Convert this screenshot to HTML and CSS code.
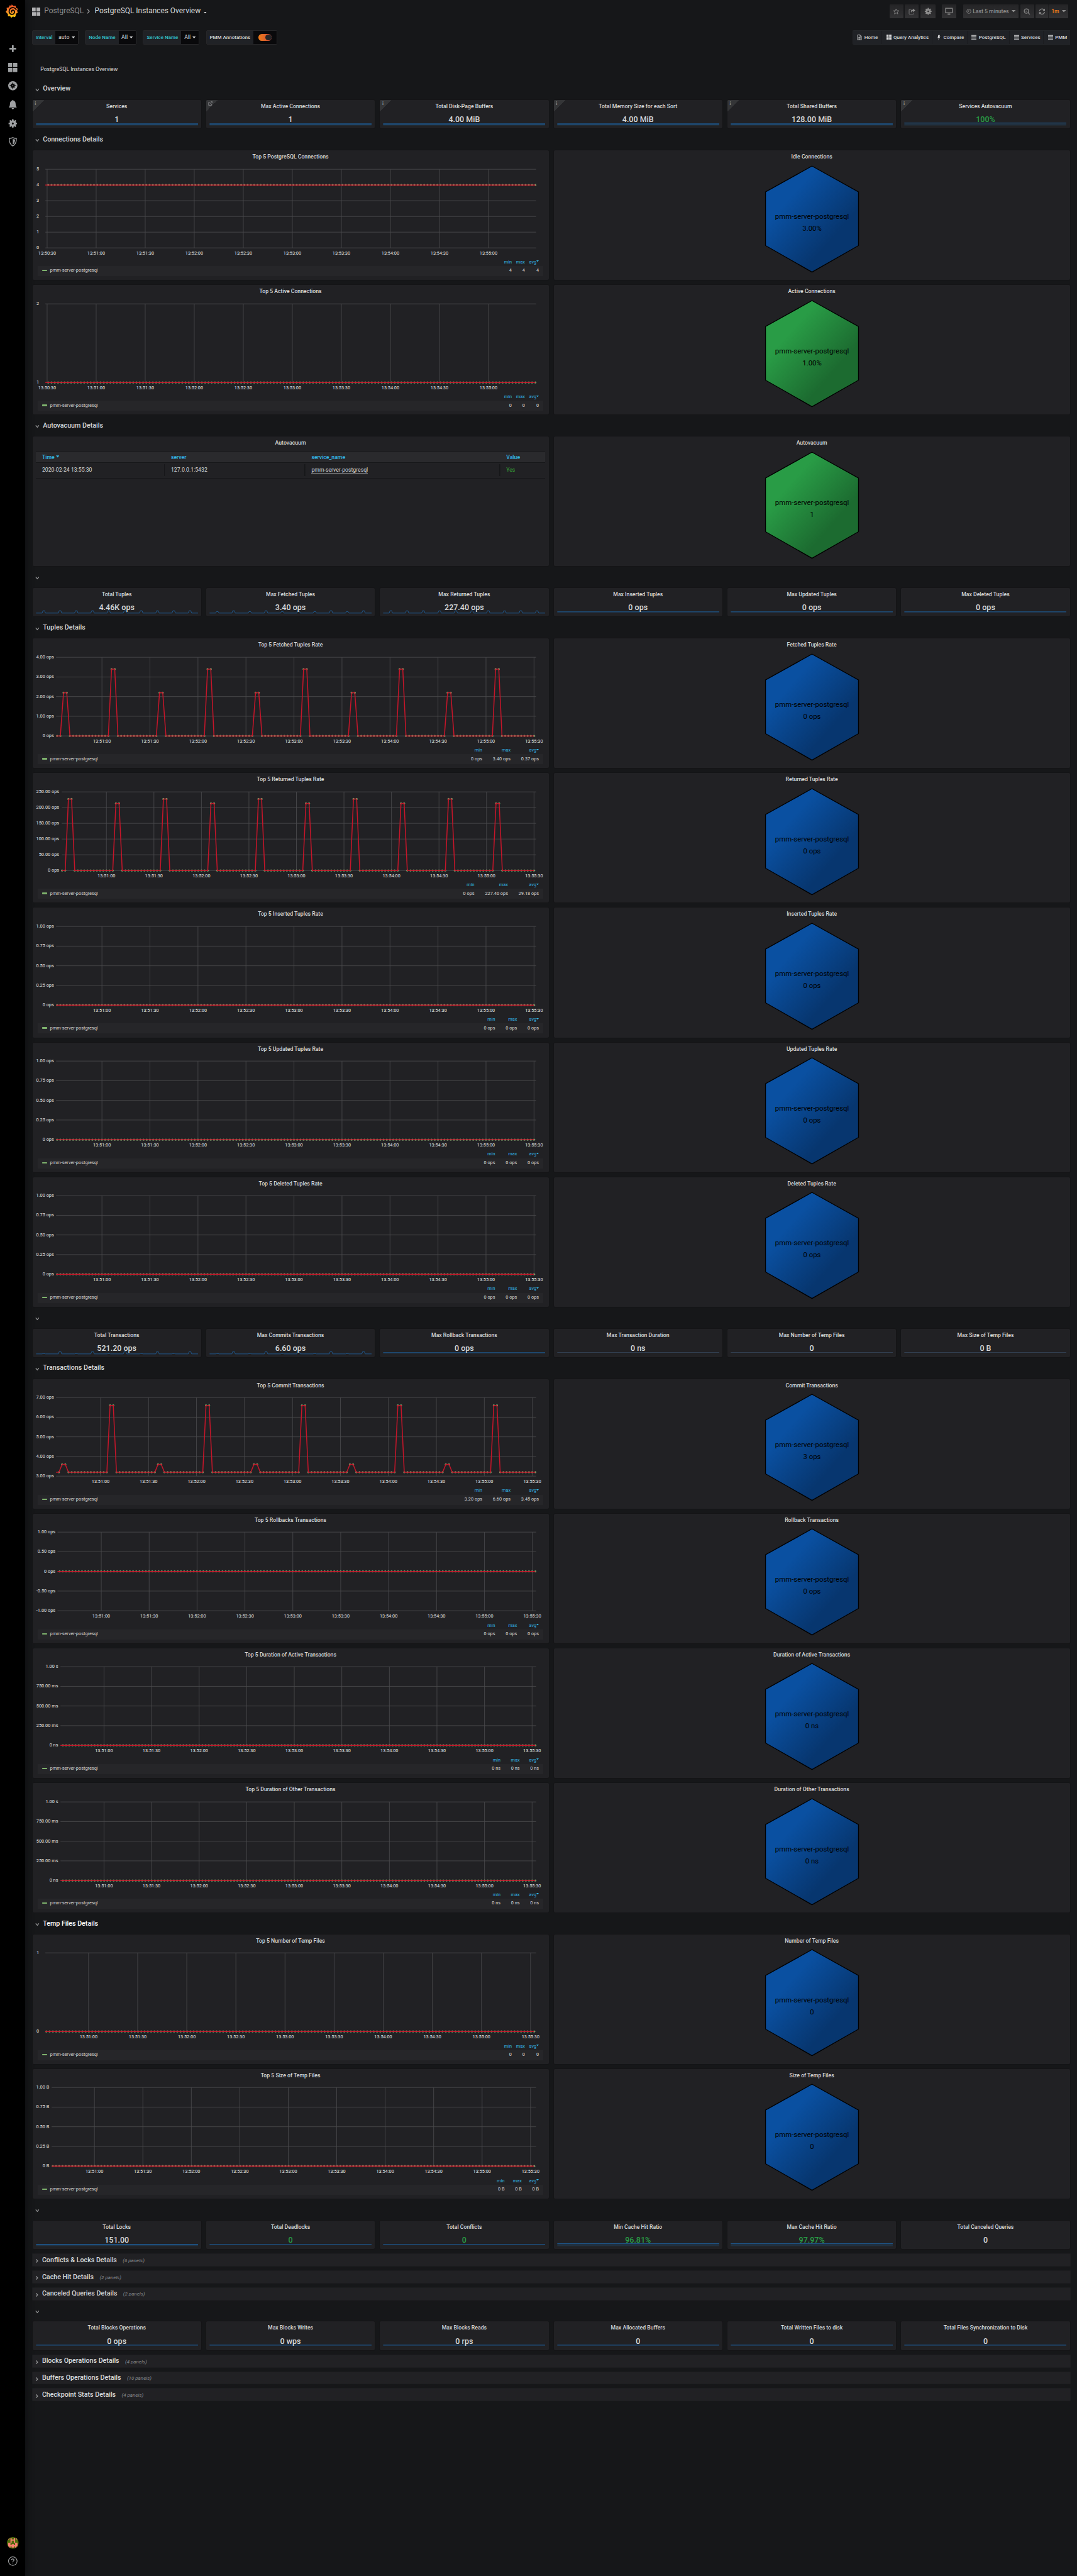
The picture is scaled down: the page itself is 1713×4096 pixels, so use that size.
FILE: index.html
```
<!DOCTYPE html>
<html lang="en">
<head>
<meta charset="utf-8">
<title>PostgreSQL Instances Overview</title>
<link rel="stylesheet" href="styles.css">
</head>
<body>
<svg class="defs" aria-hidden="true">
  <defs>
    <linearGradient id="hex-blue" x1="0" y1="0" x2="1" y2="1"><stop offset=".28" stop-color="#0a50a1"/><stop offset=".7" stop-color="#07366f"/></linearGradient>
    <linearGradient id="hex-green" x1="0" y1="0" x2="1" y2="1"><stop offset=".28" stop-color="#299c46"/><stop offset=".7" stop-color="#1c6b30"/></linearGradient>
    <linearGradient id="flame" x1="0" y1="0" x2="0" y2="1"><stop offset="0" stop-color="#f04e28"/><stop offset=".5" stop-color="#f5842a"/><stop offset="1" stop-color="#fdd20a"/></linearGradient>
    <symbol id="i-grid" viewBox="0 0 22 22"><path d="M1 0h8.4v10.2H0V1a1 1 0 0 1 1-1zM12.200 0H21a1 1 0 0 1 1 1v9.200H11.600V0zM0 11.800h9.900V22H1a1 1 0 0 1-1-1zM11.600 11.800H22V21a1 1 0 0 1-1 1h-9.400z"/></symbol>
    <symbol id="i-gear" viewBox="0 0 24 24"><path fill-rule="evenodd" d="M10.300 1h3.400l.5 3 1.900.8 2.500-1.800 2.400 2.400-1.800 2.500.8 1.900 3 .5v3.400l-3 .5-.8 1.900 1.800 2.500-2.400 2.400-2.500-1.800-1.900.8-.5 3h-3.400l-.5-3-1.900-.8L5.400 21 3 18.600l1.800-2.500-.8-1.900-3-.5v-3.400l3-.5.8-1.900L3 5.400 5.400 3l2.500 1.800L9.800 4zM12 9.500a2.500 2.500 0 1 0 0 5 2.500 2.500 0 0 0 0-5z"/></symbol>
    <symbol id="i-bars" viewBox="0 0 12 12"><path d="M0 1.200h12v1.300H0zM0 4.200h12v1.300H0zM0 7.200h12v1.300H0zM0 10.200h12v1.300H0z"/></symbol>
    <symbol id="i-caret" viewBox="0 0 8 5"><path d="M0 0h8L4 4.600z"/></symbol>
    <symbol id="i-link" viewBox="0 0 12 12"><path fill="none" stroke="currentColor" stroke-width="1.300" d="M9 7v3.500H1.200V3H5.500M4.500 7.500L10.500 1.500M7 1h4v4"/></symbol>
  </defs>
</svg>
<aside class="sidebar">
  <svg class="logo" viewBox="0 0 30 32"><path fill="url(#flame)" d="M14.500 0l3.600 3.200 5.400-.4 1 5 4.500 2.700-1.800 4.600 1.600 4.700-4.200 2.200-.8 5-1.600 3.200-5-1.500-3.700 2.900-3-3.600-5 .2-.2-5.200L0 17.600l3.200-4-1-5.300 5.300-1.100 2-4.900 4 .8z"/><path fill="none" stroke="#000" stroke-width="2.600" stroke-linecap="round" d="M25 12.500C22.500 7.500 16.500 6.200 12.200 9 7.500 12.200 7 18.500 10.300 21.700c3.500 3.300 9.200 2.200 10.700-1.900 1.200-3.500-1.300-6.500-4.300-6.200-2.400.3-3.300 2.700-2.200 4.200"/></svg>
  <nav class="side-nav">
    <svg viewBox="0 0 22 22"><path d="M9 3h4v6h6v4h-6v6H9v-6H3V9h6z"/></svg>
    <svg><use href="#i-grid"/></svg>
    <svg viewBox="0 0 22 22"><circle cx="11" cy="11" r="11"/><path fill="#000" d="M11 2l1.600 5.200L16 6l-1.200 3.400L20 11l-5.200 1.600L16 16l-3.400-1.200L11 20l-1.600-5.200L6 16l1.200-3.400L2 11l5.200-1.600L6 6l3.400 1.200z"/><circle cx="11" cy="11" r="1.300"/></svg>
    <svg viewBox="0 0 22 22"><path d="M11 0c1 0 1.500.6 1.500 1.500C16 2.200 17.500 5 17.700 8.500c.2 4.500.8 6.500 2.300 8v1.600H2v-1.600c1.500-1.500 2.100-3.500 2.300-8C4.500 5 6 2.200 9.500 1.500 9.500.6 10 0 11 0zM8.500 19.500h5c0 1.500-1 2.500-2.500 2.500s-2.500-1-2.500-2.500z"/></svg>
    <svg><use href="#i-gear"/></svg>
    <svg viewBox="0 0 22 22"><path fill="none" stroke="#9fa1a3" stroke-width="2" d="M11 1.200c2.500 1.300 5.500 1.800 8.500 1.800.3 8-2.200 14.500-8.500 18C4.700 17.500 2.200 11 2.500 3 5.500 3 8.500 2.500 11 1.200z"/><path d="M11 4.500c1.800.8 3.500 1.200 5.500 1.300-.2 5.500-2 9.500-5.500 12z"/></svg>
  </nav>
  <div class="side-foot">
    <svg class="avatar" viewBox="0 0 28 28"><clipPath id="disc"><circle cx="14" cy="14" r="14"/></clipPath><g clip-path="url(#disc)"><path fill="#4f6b0a" d="M0 0h28v28H0z"/><path fill="#fa8072" d="M3 3h3v3H3zM22 3h3v3h-3zM8.500 3h2.800v3h5.400V3h2.800v11h-2.800V8.700h-5.400V14H8.500zM3 14h5.500v5.500h2.800V17h5.400v2.500h2.800V14H25v8.500h-2.800V25h-2.700v-2.500h-2.800V25h-5.400v-2.500H8.500V25H5.800v-2.500H3z"/></g></svg>
    <svg class="help" viewBox="0 0 22 22"><circle cx="11" cy="11" r="10.200" fill="none" stroke="#b0b1b3" stroke-width="1.500"/><path fill="none" stroke="#b0b1b3" stroke-width="1.700" d="M8 8.700C8 4.800 14 5 14 8.400c0 2.300-3 2.300-3 4.600M11 14.500v2"/></svg>
  </div>
</aside>
<div class="page">
  <header class="navbar">
    <div class="crumbs">
      <svg class="crumb-icon"><use href="#i-grid"/></svg>
      <span class="folder">PostgreSQL</span>
      <svg class="crumb-sep" viewBox="0 0 8 12"><path d="M1.500 1l4.500 5-4.500 5"/></svg>
      <span class="board">PostgreSQL Instances Overview</span>
      <svg class="caret"><use href="#i-caret"/></svg>
    </div>
    <div class="tools">
      <span class="btn b-star"><svg viewBox="0 0 16 16"><path class="line" d="M8 1.500l1.800 4.300 4.700.4-3.600 3 1.100 4.600L8 11.300l-4 2.500 1.100-4.600-3.600-3 4.700-.4z"/></svg></span>
      <span class="btn b-share"><svg viewBox="0 0 16 16"><path class="line" d="M7 2.500H3a1.500 1.500 0 0 0-1.500 1.500v9A1.500 1.500 0 0 0 3 14.500h8a1.500 1.500 0 0 0 1.500-1.500v-2"/><path d="M10.500 1L16 5.200l-5.500 4.200V6.800C8 6.800 7 7.800 6.800 10.500 4 6 6.500 3.600 10.500 3.600z"/></svg></span>
      <span class="btn b-gear"><svg class="big"><use href="#i-gear"/></svg></span>
      <span class="btn b-tv"><svg class="big" viewBox="0 0 18 16"><path class="line thick" d="M1.500 1h15v10.500h-15z"/><path d="M6 13h6v2.500H6z"/></svg></span>
      <span class="btn b-time"><svg class="clock" viewBox="0 0 12 12"><circle class="line" cx="6" cy="6" r="5"/><path class="line" d="M6 3v3.300H3.800"/></svg>Last 5 minutes<svg class="caret"><use href="#i-caret"/></svg></span>
      <span class="btn b-zoom"><svg viewBox="0 0 16 16"><circle class="line thick" cx="6.800" cy="6.800" r="5.200"/><path class="line thick" d="M4.500 6.800h4.600M10.700 10.700l4.300 4.300"/></svg></span>
      <span class="btn b-refresh"><svg viewBox="0 0 16 16"><path class="line thick" d="M2 7a6 6 0 0 1 11-2.500M14 9A6 6 0 0 1 3 11.500"/><path d="M15 1v5.500H9.500zM1 15V9.500h5.500z"/></svg></span>
      <span class="btn b-every">1m<svg class="caret"><use href="#i-caret"/></svg></span>
    </div>
  </header>
  <div class="submenu">
    <div class="vars">
      <div class="var v1"><span class="var-label">Interval</span><span class="var-value">auto<svg class="caret"><use href="#i-caret"/></svg></span></div>
      <div class="var v2"><span class="var-label">Node Name</span><span class="var-value">All<svg class="caret"><use href="#i-caret"/></svg></span></div>
      <div class="var v3"><span class="var-label">Service Name</span><span class="var-value">All<svg class="caret"><use href="#i-caret"/></svg></span></div>
      <div class="var v4"><span class="var-label plain">PMM Annotations</span><span class="var-value"><i class="switch"></i></span></div>
    </div>
    <nav class="links">
      <a class="l1"><svg viewBox="0 0 12 14"><path fill="none" stroke="currentColor" stroke-width="1.200" d="M1.500.8h6l3 3.200v9.200h-9zM7.300 1v3.200h3M3.500 6.500h5M3.500 8.700h5M3.500 10.900h5"/></svg>Home</a>
      <a class="l2"><svg><use href="#i-grid"/></svg>Query Analytics</a>
      <a class="l3"><svg viewBox="0 0 12 14"><path d="M5 1h4L7.300 4.700l2.700-.5L5 13.500l1.300-6-2.800.6z"/></svg>Compare</a>
      <a class="l4"><svg><use href="#i-bars"/></svg>PostgreSQL</a>
      <a class="l5"><svg><use href="#i-bars"/></svg>Services</a>
      <a class="l6"><svg><use href="#i-bars"/></svg>PMM</a>
    </nav>
  </div>
  <div class="text-panel">PostgreSQL Instances Overview</div>
  <main class="dashboard" id="dashboard"></main>
</div>
<script src="dashboard.js"></script>
</body>
</html>
```
FILE: styles.css
```
/* 1rem is ten units of a 2560-unit-wide dashboard */
html { font-size: 0.390625vw; background: #161719; }
* { box-sizing: border-box; }
body { margin: 0; display: flex; min-height: 100vh; font-family: Roboto, "Liberation Sans", sans-serif; font-size: 1.3rem; color: #d8d9da; background: #161719; overflow: hidden; }
svg { display: block; flex: none; fill: currentColor; }
.defs { position: absolute; width: 0; height: 0; }

.sidebar { width: 6rem; flex: none; background: #000; color: #9fa1a3; display: flex; flex-direction: column; align-items: center; padding: 1.1rem 0 2.400rem .2rem; box-shadow: 0 0 2rem #0b0c0e; }
.logo { width: 3rem; height: 3.200rem; margin-right: .5rem; }
.side-nav { display: flex; flex-direction: column; gap: 2.220rem; margin-top: 6.200rem; }
.side-nav svg { width: 2.200rem; height: 2.200rem; }
.side-foot { margin-top: auto; display: flex; flex-direction: column; align-items: center; gap: 1.900rem; }
.avatar { width: 2.800rem; height: 2.800rem; }
.help { width: 2.200rem; height: 2.200rem; }

.page { flex: 1; min-width: 0; padding: 0 1.700rem 0 1.700rem; }
.navbar { display: flex; justify-content: space-between; height: 5.500rem; }
.crumbs { display: flex; align-items: center; font-size: 1.780rem; line-height: 1; }
.crumb-icon { width: 2rem; height: 2rem; color: #b0b0b2; margin: 0 .9rem 0 -.1rem; }
.folder { color: #8e8e8e; }
.crumb-sep { width: .8rem; height: 1.200rem; margin: 0 1rem 0 .8rem; fill: none; stroke: #9a9a9c; stroke-width: 2; }
.caret { width: .8rem; height: .5rem; }
.crumbs .caret { width: .7rem; height: .4rem; margin: .5rem 0 0 .8rem; }
.tools { display: flex; padding-top: 1.100rem; margin-right: .4rem; color: #8e8e8e; font-weight: 500; }
.btn { height: 3.200rem; display: flex; align-items: center; justify-content: center; background: linear-gradient(#242426, #323234); border-radius: .2rem; margin-left: .4rem; }
.btn svg { width: 1.600rem; height: 1.600rem; }
.btn .big { width: 1.900rem; height: 1.800rem; }
.line { fill: none; stroke: currentColor; stroke-width: 1.200; }
.thick { stroke-width: 1.800; }
.b-star, .b-share, .b-zoom { width: 3.300rem; }
.b-gear { width: 3.600rem; }
.b-tv { width: 3.500rem; margin-left: 1.400rem; }
.b-time { width: 13.200rem; margin-left: 1.600rem; }
.b-time .clock { width: 1.200rem; height: 1.200rem; margin-right: .3rem; }
.btn .caret { width: .9rem; height: .6rem; margin-left: .6rem; }
.b-refresh { width: 3.050rem; border-right: 1px solid #1f1f21; }
.b-every { width: 4.650rem; margin-left: 0; color: #eb7b18; }
.b-every .caret { color: #8e8e8e; }

.submenu { display: flex; justify-content: space-between; margin: 1.600rem -.1rem 0 -.1rem; height: 3.500rem; }
.vars { display: flex; gap: 1.550rem; }
.var { display: flex; border: 1px solid #262628; border-radius: .3rem; overflow: hidden; }
.var-label { flex: 1; display: flex; align-items: center; justify-content: center; background: #202226; color: #33c5cf; font-size: 1.200rem; font-weight: 500; }
.plain { color: #d8d9da; }
.var-value { display: flex; align-items: center; justify-content: center; background: #09090b; gap: .5rem; }
.v1 { width: 11.050rem; } .v1 .var-value { width: 5.300rem; }
.v2 { width: 12.250rem; } .v2 .var-value { width: 4.100rem; }
.v3 { width: 13.450rem; } .v3 .var-value { width: 4.200rem; }
.v4 { width: 16.950rem; } .v4 .var-value { width: 5.600rem; }
.switch { width: 3.200rem; height: 1.600rem; border-radius: .8rem; background: linear-gradient(90deg, #eb7b18, #d44a3a); display: flex; justify-content: flex-end; align-items: center; padding-right: .1rem; }
.switch::after { content: ""; width: 1.400rem; height: 1.400rem; border-radius: 50%; background: #262628; }
.links { display: flex; font-size: 1.200rem; font-weight: 500; border-radius: .3rem 0 0 .3rem; background: #202226; border: 1px solid #242629; border-right: 0; }
.links a { display: flex; align-items: center; padding-left: 1rem; gap: .5rem; border-right: 1px solid #1b1c1f; white-space: nowrap; }
.links a:last-child { border-right: 0; }
.links svg { width: 1.200rem; height: 1.200rem; }
.links .l1 svg, .links .l3 svg { height: 1.400rem; }
.l1 { width: 6.900rem; } .l2 { width: 11.900rem; } .l3 { width: 8.400rem; } .l4 { width: 10.050rem; } .l5 { width: 8.100rem; } .l6 { width: 6.300rem; }

.text-panel { margin-top: 1.100rem; height: 6.800rem; padding: 3.900rem 0 0 1.900rem; line-height: 2rem; }

.dashboard { display: flex; flex-direction: column; gap: 1.200rem; margin-top: 1.250rem; }
.row-head { display: flex; align-items: center; height: 2.800rem; padding: .1rem 0 0 .7rem; font-size: 1.600rem; font-weight: 500; line-height: 1; }
.row-head .chev { width: 1rem; height: .9rem; margin: .4rem .8rem 0 0; }
.row-head.closed { background: #212124; box-shadow: 0 0 0 .1rem #212124; padding-left: .5rem; }
.row-head.hover { color: #fff; }
.row-head em { font-size: 1.200rem; font-weight: 400; color: #8a8b8d; margin: .25rem 0 0 1.400rem; }
.chev { fill: none; stroke: #9a9b9d; stroke-width: 1.800; }
.stats { display: grid; grid-template-columns: repeat(6, 1fr); gap: 1.200rem; }
.pair { display: grid; grid-template-columns: 1fr 1fr; gap: 1.200rem; }
.panel { position: relative; background: #212124; border-radius: .3rem; box-shadow: 0 0 0 .1rem #141416; overflow: hidden; }
.panel h3 { margin: 0; height: 2.900rem; line-height: 3.050rem; text-align: center; font-size: 1.300rem; font-weight: 500; }
.stat { height: 6.800rem; }
.stat .value { position: relative; text-align: center; font-size: 1.870rem; font-weight: 500; line-height: 2.200rem; margin-top: .7rem; }
.stat .ok { color: #299c46; }
.spark { position: absolute; left: 0; top: 0; width: 100%; height: 100%; }
.corner { position: absolute; left: 0; top: 0; width: 2.750rem; height: 2.750rem; background: linear-gradient(135deg, #343537 50%, transparent 50%); color: #8b8c8e; padding: .25rem 0 0 .55rem; font: 700 1.100rem/1.200rem "Liberation Serif", serif; }
.corner svg { width: 1.100rem; height: 1.100rem; margin-left: -.15rem; }
.graph { height: 30.800rem; }
.graph .plot { width: 100%; height: 22.800rem; }
.plot text { font-size: 11px; fill: #e0e1e2; }
.grid-line { stroke: #4a4a4d; stroke-width: 1.300; }
.series { fill: none; stroke: #c4162a; stroke-width: 2.300; }
.dot { fill: #7ea76e; }
.legend { width: 120.100rem; margin-left: 1.300rem; border-collapse: collapse; font-size: 1.100rem; line-height: 1.300rem; white-space: nowrap; }
.legend th { font-weight: 400; color: #33b5e5; height: 1.800rem; padding: 0 0 0 1rem; text-align: right; }
.legend td { height: 2.400rem; padding: 0 0 .1rem 2.500rem; text-align: right; background: #262629; }
.legend .name { width: 100%; text-align: left; padding-left: 1.050rem; }
.legend .name i { display: inline-block; width: 1.200rem; height: .35rem; border-radius: .1rem; background: #7eb26d; margin-right: .65rem; vertical-align: .15rem; }
.legend .last { padding-right: 1rem; }
.legend .sort { display: inline-block; width: .6rem; height: .4rem; vertical-align: .25rem; }
.hex { width: 100%; height: 27.900rem; }
.hex polygon { stroke: #000; stroke-width: 2; }
.hex text { font-size: 17px; fill: #000; text-anchor: middle; }
.table-wrap { padding: .7rem .85rem 0; }
.data { width: 100%; table-layout: fixed; border-collapse: collapse; font-size: 1.300rem; line-height: 1; }
.data th { text-align: left; font-weight: 500; color: #33b5e5; background: #2a2a2d; border-top: .25rem solid #161719; border-bottom: .25rem solid #161719; height: 2.500rem; padding: 0 1.450rem; }
.data td { height: 3.700rem; padding: 0 1.450rem; border-bottom: .2rem solid #161719; background: linear-gradient(#161719, #161719) right 55% / .25rem 80% no-repeat; }
.data td:last-child { background: none; color: #37a337; }
.data td span { border-bottom: 1px solid #d8d9da; padding-bottom: .1rem; }
.data .sort { display: inline-block; width: .8rem; height: .6rem; margin-left: .3rem; vertical-align: .2rem; }
.c1 { width: 30.650rem; } .c2 { width: 33.400rem; } .c3 { width: 46.300rem; }
```
FILE: dashboard.js
```
const NAME = 'pmm-server-postgresql';
const caret = '<svg class="sort"><use href="#i-caret"/></svg>';

const rowHead = (title = '', cls = '') =>
  `<div class="row-head ${cls}"><svg class="chev" viewBox="0 0 10 9"><path d="M1.200 2l3.800 4.500L8.800 2"/></svg>${title}</div>`;
const closedRow = (title, n) =>
  `<div class="row-head closed"><svg class="chev" viewBox="0 0 10 9"><path d="M3.500 .5l3.800 4-3.800 4"/></svg>${title}<em>(${n} panels)</em></div>`;

/* Sparkline kinds: flat lines by height, or spikes [even, odd] above the base */
function spark(kind) {
  if (!kind) return '';
  const flat = { high: [57, 2.4, 1], full: [54.5, 1.5, 1], zero: [56.700, 2, 0], faint: [56, 1, 0] };
  let body;
  if (flat[kind]) {
    const [y, w, fill] = flat[kind];
    body = (fill ? `<path fill="#1f78c1" fill-opacity=".18" d="M8 ${y}H393V60.500H8z"/>` : '') +
      `<path fill="none" stroke="${kind === 'faint' ? '#3c5068' : '#1e578c'}" stroke-width="${w}" d="M8 ${y}H393"/>`;
  } else {
    let d = 'M8 59.500';
    for (let i = 0; i < 10; i++) {
      const x = 26.400 + i * 38.600, h = kind[i % 2];
      d += `H${x - 4}L${x - 2} ${59.500 - h}H${x + 2}L${x + 4} 59.500`;
    }
    body = `<path fill="none" stroke="#1f66a8" stroke-width="1.200" d="${d}H393"/>`;
  }
  return `<svg class="spark" viewBox="0 0 401 68" preserveAspectRatio="none">${body}</svg>`;
}
const stats = list => '<div class="stats">' + list.map(([title, value, kind, cls = '', corner = '']) =>
  `<section class="panel stat">${spark(kind)}${corner ? `<span class="corner">${corner}</span>` : ''}<h3>${title}</h3><div class="value ${cls}">${value}</div></section>`).join('') + '</div>';

const hex = (title, value, color = 'blue') =>
  `<section class="panel graph"><h3>${title}</h3><svg class="hex" viewBox="0 29 1227 279"><polygon fill="url(#hex-${color})" points="613.500,36.500 724,98 724,225.500 613.500,288.500 503,225.500 503,98"/><text x="613.500" y="161.500">${NAME}</text><text x="613.500" y="190.500">${value}</text></svg></section>`;

function graph(o) {
  const R = 1196.600, T = 44.200, B = 231, n = o.y.length - 1;
  const yAt = f => B - f * (B - T);
  let s = '';
  o.y.forEach((label, i) => {
    const y = yAt(i / n);
    s += `<path class="grid-line" d="M${o.left} ${y}H${R}"/><text x="${o.labelEnd}" y="${y + 3}" text-anchor="end">${label}</text>`;
  });
  const first = o.from || '13:51:00';
  const start = first === '13:50:30' ? 0 : 1;
  const step = (o.x1 - o.x0) / (o.count - 1);
  for (let i = 0; i < o.count; i++) {
    const sec = (i + start) * 30 + 30, x = o.x0 + i * step;
    const label = `13:${50 + Math.floor(sec / 60)}:${sec % 60 ? '30' : '00'}`;
    s += `<path class="grid-line" d="M${x} ${T}V${B}"/><text x="${x}" y="247.400" text-anchor="middle">${label}</text>`;
  }
  /* one sample every two seconds, counted back from the newest */
  const dx = step / 15, last = o.last || 1194.800, pts = [];
  for (let k = Math.floor((last - o.left) / dx); k >= 0; k--) {
    let f = o.base;
    if (o.spikes) {
      const m = k - o.spikeAt;
      if (m >= 0 && (m % 15 === 0 || m % 15 === 1)) f = o.spikes[Math.floor(m / 15) % 2];
    }
    pts.push([last - k * dx, yAt(f)]);
  }
  s += pts.map(p => `<circle class="dot" cx="${p[0].toFixed(1)}" cy="${p[1].toFixed(1)}" r="2.400"/>`).join('');
  s += `<path class="series" d="M${o.left} ${yAt(o.base)}L${pts.map(p => p[0].toFixed(1) + ' ' + p[1].toFixed(1)).join('L')}"/>`;
  const [mn, mx, av] = o.legend;
  return `<section class="panel graph"><h3>${o.title}</h3><svg class="plot" viewBox="0 29 1227 228">${s}</svg>
  <table class="legend"><tr><th></th><th>min</th><th>max</th><th class="last">avg${caret}</th></tr>
  <tr><td class="name"><i></i>${NAME}</td><td>${mn}</td><td>${mx}</td><td class="last">${av}</td></tr></table></section>`;
}
const pair = (a, b) => `<div class="pair">${a}${b}</div>`;

const conn = { left: 30, labelEnd: 15, x0: 34.300, x1: 1083.400, count: 10, from: '13:50:30' };
const ops = { left: 55.600, labelEnd: 50.500, x0: 164.600, x1: 1191.600, count: 10, last: 1191.600 };
const unit = { ...ops, y: ['0 ops', '0.25 ops', '0.50 ops', '0.75 ops', '1.00 ops'], base: 0, legend: ['0 ops', '0 ops', '0 ops'] };
const dur = { left: 66, labelEnd: 60.500, x0: 169.500, x1: 1187, count: 10, y: ['0 ns', '250.00 ms', '500.00 ms', '750.00 ms', '1.00 s'], base: 0, legend: ['0 ns', '0 ns', '0 ns'] };
const link = '<svg><use href="#i-link"/></svg>';

const table = `<section class="panel graph"><h3>Autovacuum</h3><div class="table-wrap"><table class="data">
  <tr><th class="c1">Time${caret}</th><th class="c2">server</th><th class="c3">service_name</th><th>Value</th></tr>
  <tr><td>2020-02-24 13:55:30</td><td>127.0.0.1:5432</td><td><span>${NAME}</span></td><td>Yes</td></tr></table></div></section>`;

document.getElementById('dashboard').innerHTML = [
  rowHead('Overview'),
  stats([['Services', '1', 'high', '', 'i'], ['Max Active Connections', '1', 'high', '', link], ['Total Disk-Page Buffers', '4.00 MiB', 'high', '', 'i'],
    ['Total Memory Size for each Sort', '4.00 MiB', 'high', '', 'i'], ['Total Shared Buffers', '128.00 MiB', 'high', '', 'i'], ['Services Autovacuum', '100%', 'full', 'ok', 'i']]),
  rowHead('Connections Details'),
  pair(graph({ ...conn, title: 'Top 5 PostgreSQL Connections', y: ['0', '1', '2', '3', '4', '5'], base: .8, legend: ['4', '4', '4'] }), hex('Idle Connections', '3.00%')),
  pair(graph({ ...conn, title: 'Top 5 Active Connections', y: ['1', '2'], base: 0, legend: ['0', '0', '0'] }), hex('Active Connections', '1.00%', 'green')),
  rowHead('Autovacuum Details'),
  pair(table, hex('Autovacuum', '1', 'green')),
  rowHead(),
  stats([['Total Tuples', '4.46K ops', [5.500, 5.500]], ['Max Fetched Tuples', '3.40 ops', [3.600, 5.500]], ['Max Returned Tuples', '227.40 ops', [5.500, 5.300]],
    ['Max Inserted Tuples', '0 ops', 'zero'], ['Max Updated Tuples', '0 ops', 'zero'], ['Max Deleted Tuples', '0 ops', 'zero']]),
  rowHead('Tuples Details'),
  pair(graph({ ...ops, title: 'Top 5 Fetched Tuples Rate', y: ['0 ops', '1.00 ops', '2.00 ops', '3.00 ops', '4.00 ops'], base: 0, spikes: [.85, .55], spikeAt: 11, legend: ['0 ops', '3.40 ops', '0.37 ops'] }), hex('Fetched Tuples Rate', '0 ops')),
  pair(graph({ ...ops, left: 68.700, labelEnd: 63, x0: 175.200, title: 'Top 5 Returned Tuples Rate', y: ['0 ops', '50.00 ops', '100.00 ops', '150.00 ops', '200.00 ops', '250.00 ops'], base: 0, spikes: [.854, .9096], spikeAt: 11, legend: ['0 ops', '227.40 ops', '29.18 ops'] }), hex('Returned Tuples Rate', '0 ops')),
  pair(graph({ ...unit, title: 'Top 5 Inserted Tuples Rate' }), hex('Inserted Tuples Rate', '0 ops')),
  pair(graph({ ...unit, title: 'Top 5 Updated Tuples Rate' }), hex('Updated Tuples Rate', '0 ops')),
  pair(graph({ ...unit, title: 'Top 5 Deleted Tuples Rate' }), hex('Deleted Tuples Rate', '0 ops')),
  rowHead(),
  stats([['Total Transactions', '521.20 ops', [.6, 5.500]], ['Max Commits Transactions', '6.60 ops', [.6, 5.500]], ['Max Rollback Transactions', '0 ops', 'zero'],
    ['Max Transaction Duration', '0 ns', 'faint'], ['Max Number of Temp Files', '0', 'faint'], ['Max Size of Temp Files', '0 B', 'faint']]),
  rowHead('Transactions Details'),
  pair(graph({ ...ops, x0: 161.400, x1: 1187.500, last: 1194.800, title: 'Top 5 Commit Transactions', y: ['3.00 ops', '4.00 ops', '5.00 ops', '6.00 ops', '7.00 ops'], base: .05, spikes: [.9, .15], spikeAt: 12, legend: ['3.20 ops', '6.60 ops', '3.45 ops'] }), hex('Commit Transactions', '3 ops')),
  pair(graph({ ...ops, left: 59, labelEnd: 54, x0: 163, x1: 1187.500, last: 1194.800, title: 'Top 5 Rollbacks Transactions', y: ['-1.00 ops', '-0.50 ops', '0 ops', '0.50 ops', '1.00 ops'], base: .5, legend: ['0 ops', '0 ops', '0 ops'] }), hex('Rollback Transactions', '0 ops')),
  pair(graph({ ...dur, title: 'Top 5 Duration of Active Transactions' }), hex('Duration of Active Transactions', '0 ns')),
  pair(graph({ ...dur, title: 'Top 5 Duration of Other Transactions' }), hex('Duration of Other Transactions', '0 ns')),
  rowHead('Temp Files Details', 'hover'),
  pair(graph({ left: 30, labelEnd: 15, x0: 132.800, x1: 1183.400, count: 10, last: 1192, title: 'Top 5 Number of Temp Files', y: ['0', '1'], base: 0, legend: ['0', '0', '0'] }), hex('Number of Temp Files', '0')),
  pair(graph({ left: 45, labelEnd: 39.300, x0: 146.700, x1: 1183.400, count: 10, last: 1192, title: 'Top 5 Size of Temp Files', y: ['0 B', '0.25 B', '0.50 B', '0.75 B', '1.00 B'], base: 0, legend: ['0 B', '0 B', '0 B'] }), hex('Size of Temp Files', '0')),
  rowHead(),
  stats([['Total Locks', '151.00', 'high'], ['Total Deadlocks', '0', 'zero', 'ok'], ['Total Conflicts', '0', 'zero', 'ok'],
    ['Min Cache Hit Ratio', '96.81%', 'full', 'ok'], ['Max Cache Hit Ratio', '97.97%', 'full', 'ok'], ['Total Canceled Queries', '0', '']]),
  closedRow('Conflicts &amp; Locks Details', 6),
  closedRow('Cache Hit Details', 2),
  closedRow('Canceled Queries Details', 2),
  rowHead(),
  stats([['Total Blocks Operations', '0 ops', 'zero'], ['Max Blocks Writes', '0 wps', 'zero'], ['Max Blocks Reads', '0 rps', 'zero'],
    ['Max Allocated Buffers', '0', 'zero'], ['Total Written Files to disk', '0', 'zero'], ['Total Files Synchronization to Disk', '0', 'zero']]),
  closedRow('Blocks Operations Details', 4),
  closedRow('Buffers Operations Details', 10),
  closedRow('Checkpoint Stats Details', 4)
].join('');
```
